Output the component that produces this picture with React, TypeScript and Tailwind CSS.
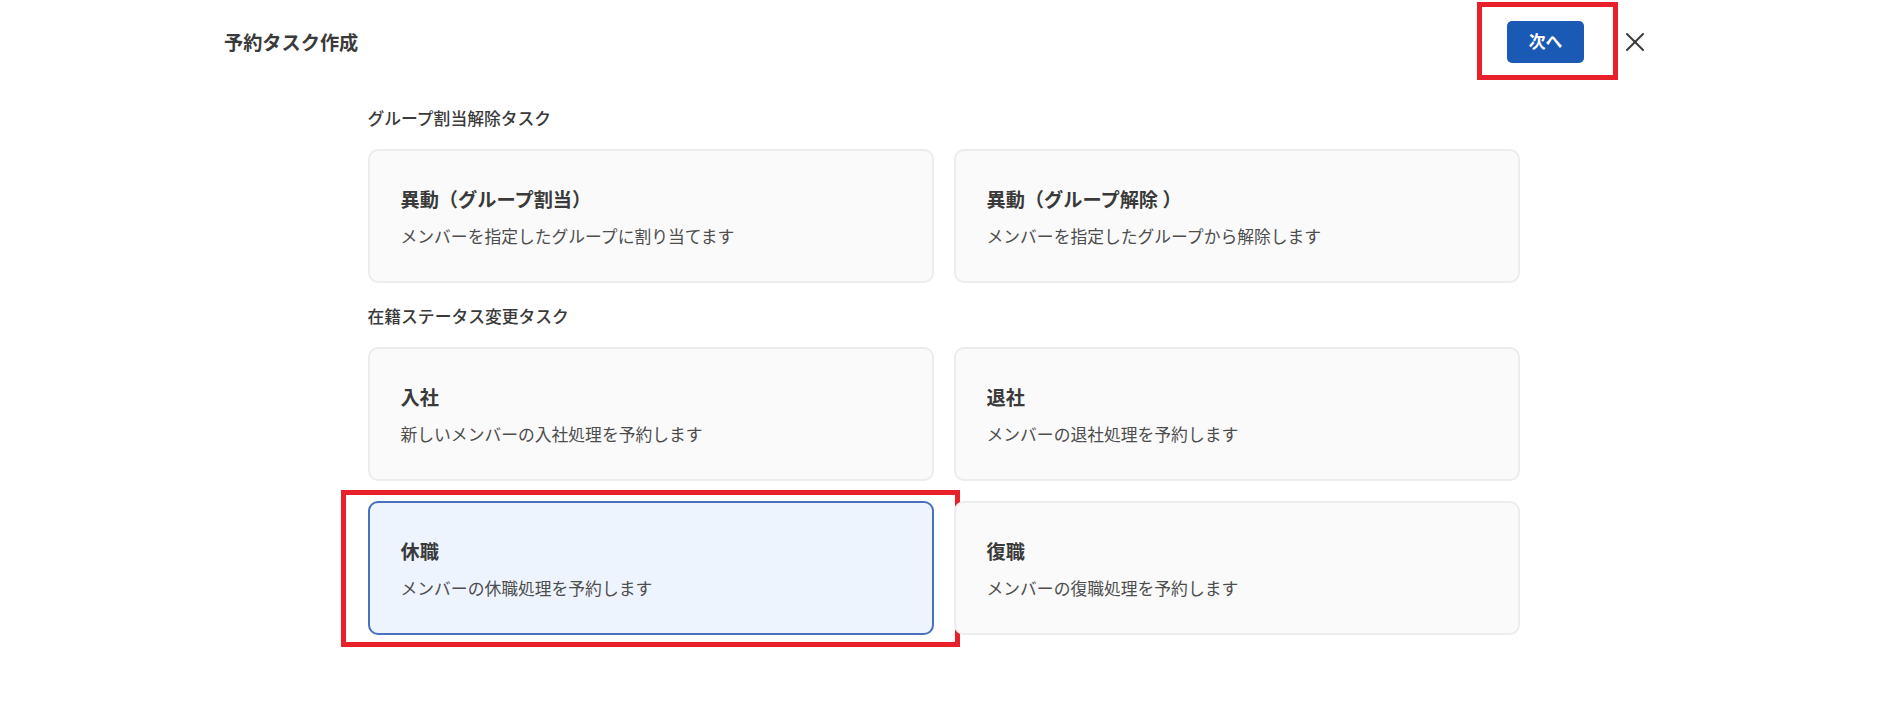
import { X } from "lucide-react";

type Task = {
  id: string;
  title: string;
  description: string;
};

const sections: { heading: string; tasks: Task[] }[] = [
  {
    heading: "グループ割当解除タスク",
    tasks: [
      { id: "assign", title: "異動（グループ割当）", description: "メンバーを指定したグループに割り当てます" },
      { id: "unassign", title: "異動（グループ解除 ）", description: "メンバーを指定したグループから解除します" },
    ],
  },
  {
    heading: "在籍ステータス変更タスク",
    tasks: [
      { id: "join", title: "入社", description: "新しいメンバーの入社処理を予約します" },
      { id: "leave", title: "退社", description: "メンバーの退社処理を予約します" },
      { id: "suspend", title: "休職", description: "メンバーの休職処理を予約します" },
      { id: "resume", title: "復職", description: "メンバーの復職処理を予約します" },
    ],
  },
];

const selectedId = "suspend";

const TaskCard = ({ task }: { task: Task }) => {
  const selected = task.id === selectedId;
  return (
    <div className="relative">
      <button
        type="button"
        className={`flex h-[134px] w-full flex-col items-start justify-center gap-[11px] rounded-[10px] border-2 px-[31px] text-left ${
          selected
            ? "border-[#4a70bf] bg-[#eef4fe]"
            : "border-[#ececec] bg-[#fafafa]"
        }`}
      >
        <span className="text-[19.2px] leading-[28px] font-bold text-[#3a3a3a]">
          {task.title}
        </span>
        <span className="text-[16.8px] leading-[24px] text-[#4d4d4d]">
          {task.description}
        </span>
      </button>
      {selected && (
        <div className="pointer-events-none absolute -top-[11px] -bottom-[12px] -left-[27px] -right-[26px] border-[5px] border-[#e8202a]" />
      )}
    </div>
  );
};

export default function App() {
  return (
    <div
      className="min-h-[712px] w-full bg-white"
      style={{ fontFamily: '"Noto Sans CJK JP", "Noto Sans", sans-serif' }}
    >
      {/* header */}
      <header className="flex h-[84px] items-center justify-between pl-[224px] pr-[236px]">
        <h1 className="text-[19.2px] font-bold text-[#3a3a3a]">予約タスク作成</h1>
        <div className="flex items-center gap-[35px]">
          <div className="relative">
            <button
              type="button"
              className="flex h-[42px] w-[77px] items-center justify-center rounded-[5px] bg-[#1a5ab5] text-[16.8px] font-bold text-white"
            >
              次へ
            </button>
            <div className="pointer-events-none absolute -top-[19px] -bottom-[17px] -left-[30px] -right-[34px] border-[5px] border-[#e8202a]" />
          </div>
          <button
            type="button"
            className="flex h-[32px] w-[32px] items-center justify-center text-[#3a3a3a]"
          >
            <X size={32} strokeWidth={1.5} />
          </button>
        </div>
      </header>

      {/* body */}
      <main className="mx-auto flex w-[1152px] flex-col gap-[21px] pt-[22px]">
        {sections.map((section) => (
          <section key={section.heading}>
            <h2 className="mb-[19px] text-[16.8px] leading-[24px] font-medium text-[#3a3a3a]">
              {section.heading}
            </h2>
            <div className="grid grid-cols-2 gap-[20px]">
              {section.tasks.map((task) => (
                <TaskCard key={task.id} task={task} />
              ))}
            </div>
          </section>
        ))}
      </main>
    </div>
  );
}
